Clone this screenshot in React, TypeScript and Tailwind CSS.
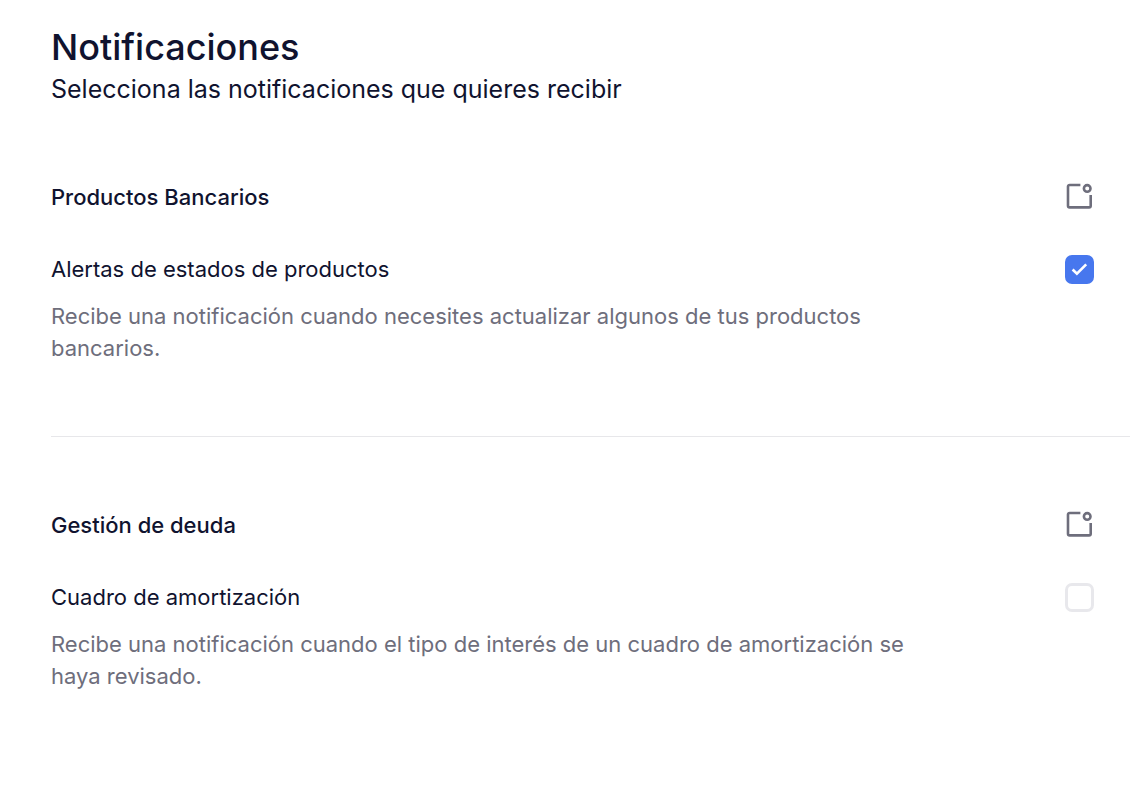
import { useState } from "react";

interface NotificationSetting {
  id: string;
  category: string;
  label: string;
  description: string;
  enabled: boolean;
}

const SETTINGS: NotificationSetting[] = [
  {
    id: "product-status",
    category: "Productos Bancarios",
    label: "Alertas de estados de productos",
    description:
      "Recibe una notificación cuando necesites actualizar algunos de tus productos bancarios.",
    enabled: true,
  },
  {
    id: "amortization",
    category: "Gestión de deuda",
    label: "Cuadro de amortización",
    description:
      "Recibe una notificación cuando el tipo de interés de un cuadro de amortización se haya revisado.",
    enabled: false,
  },
];

function InboxBadgeIcon() {
  return (
    <svg
      className="size-7 shrink-0 text-[#6e6e7c]"
      viewBox="0 0 28 28"
      fill="none"
      stroke="currentColor"
      strokeWidth="2.6"
      aria-hidden="true"
    >
      <path d="M14.4 2H3.6A1.6 1.6 0 0 0 2 3.6v19.2a1.6 1.6 0 0 0 1.6 1.6h19.5a1.6 1.6 0 0 0 1.6-1.6V12" />
      <circle cx="21.2" cy="5.4" r="3.3" />
    </svg>
  );
}

interface SettingProps {
  setting: NotificationSetting;
}

function Setting({ setting }: SettingProps) {
  const [checked, setChecked] = useState(setting.enabled);

  return (
    <section className="border-t border-[#e7e7ea] py-[72px] first:border-t-0">
      <div className="flex items-center justify-between pr-9">
        <h2 className="text-[22px] leading-8 font-medium">
          {setting.category}
        </h2>
        <InboxBadgeIcon />
      </div>

      <div className="mt-10 flex items-center justify-between pr-9">
        <label htmlFor={setting.id} className="text-[22px] leading-8">
          {setting.label}
        </label>
        <span className="relative size-[29px] shrink-0">
          <input
            id={setting.id}
            type="checkbox"
            checked={checked}
            onChange={(e) => setChecked(e.target.checked)}
            aria-describedby={`${setting.id}-description`}
            className="peer block size-full cursor-pointer appearance-none rounded-[7px] border-3 border-[#e8e8ec] bg-white checked:border-[#4777ee] checked:bg-[#4777ee]"
          />
          <svg
            className="pointer-events-none absolute inset-0 hidden text-white peer-checked:block"
            viewBox="0 0 29 29"
            fill="none"
            stroke="currentColor"
            strokeWidth="2.6"
            aria-hidden="true"
          >
            <path d="M7.6 14.5l4.3 4.2 9.3-9.3" />
          </svg>
        </span>
      </div>

      <p
        id={`${setting.id}-description`}
        className="mt-[15px] mr-9 max-w-[880px] text-[22px] leading-8 text-[#6e6e7c]"
      >
        {setting.description}
      </p>
    </section>
  );
}

export default function App() {
  return (
    <main className="min-h-screen bg-white pt-[23px] pl-[51px] font-['Inter',sans-serif] text-[#10132f]">
      <header className="pb-0.5">
        <h1 className="text-[36px] leading-[48px] font-medium">
          Notificaciones
        </h1>
        <p className="text-[25px] leading-9">
          Selecciona las notificaciones que quieres recibir
        </p>
      </header>

      <div>
        {SETTINGS.map((setting) => (
          <Setting key={setting.id} setting={setting} />
        ))}
      </div>
    </main>
  );
}
